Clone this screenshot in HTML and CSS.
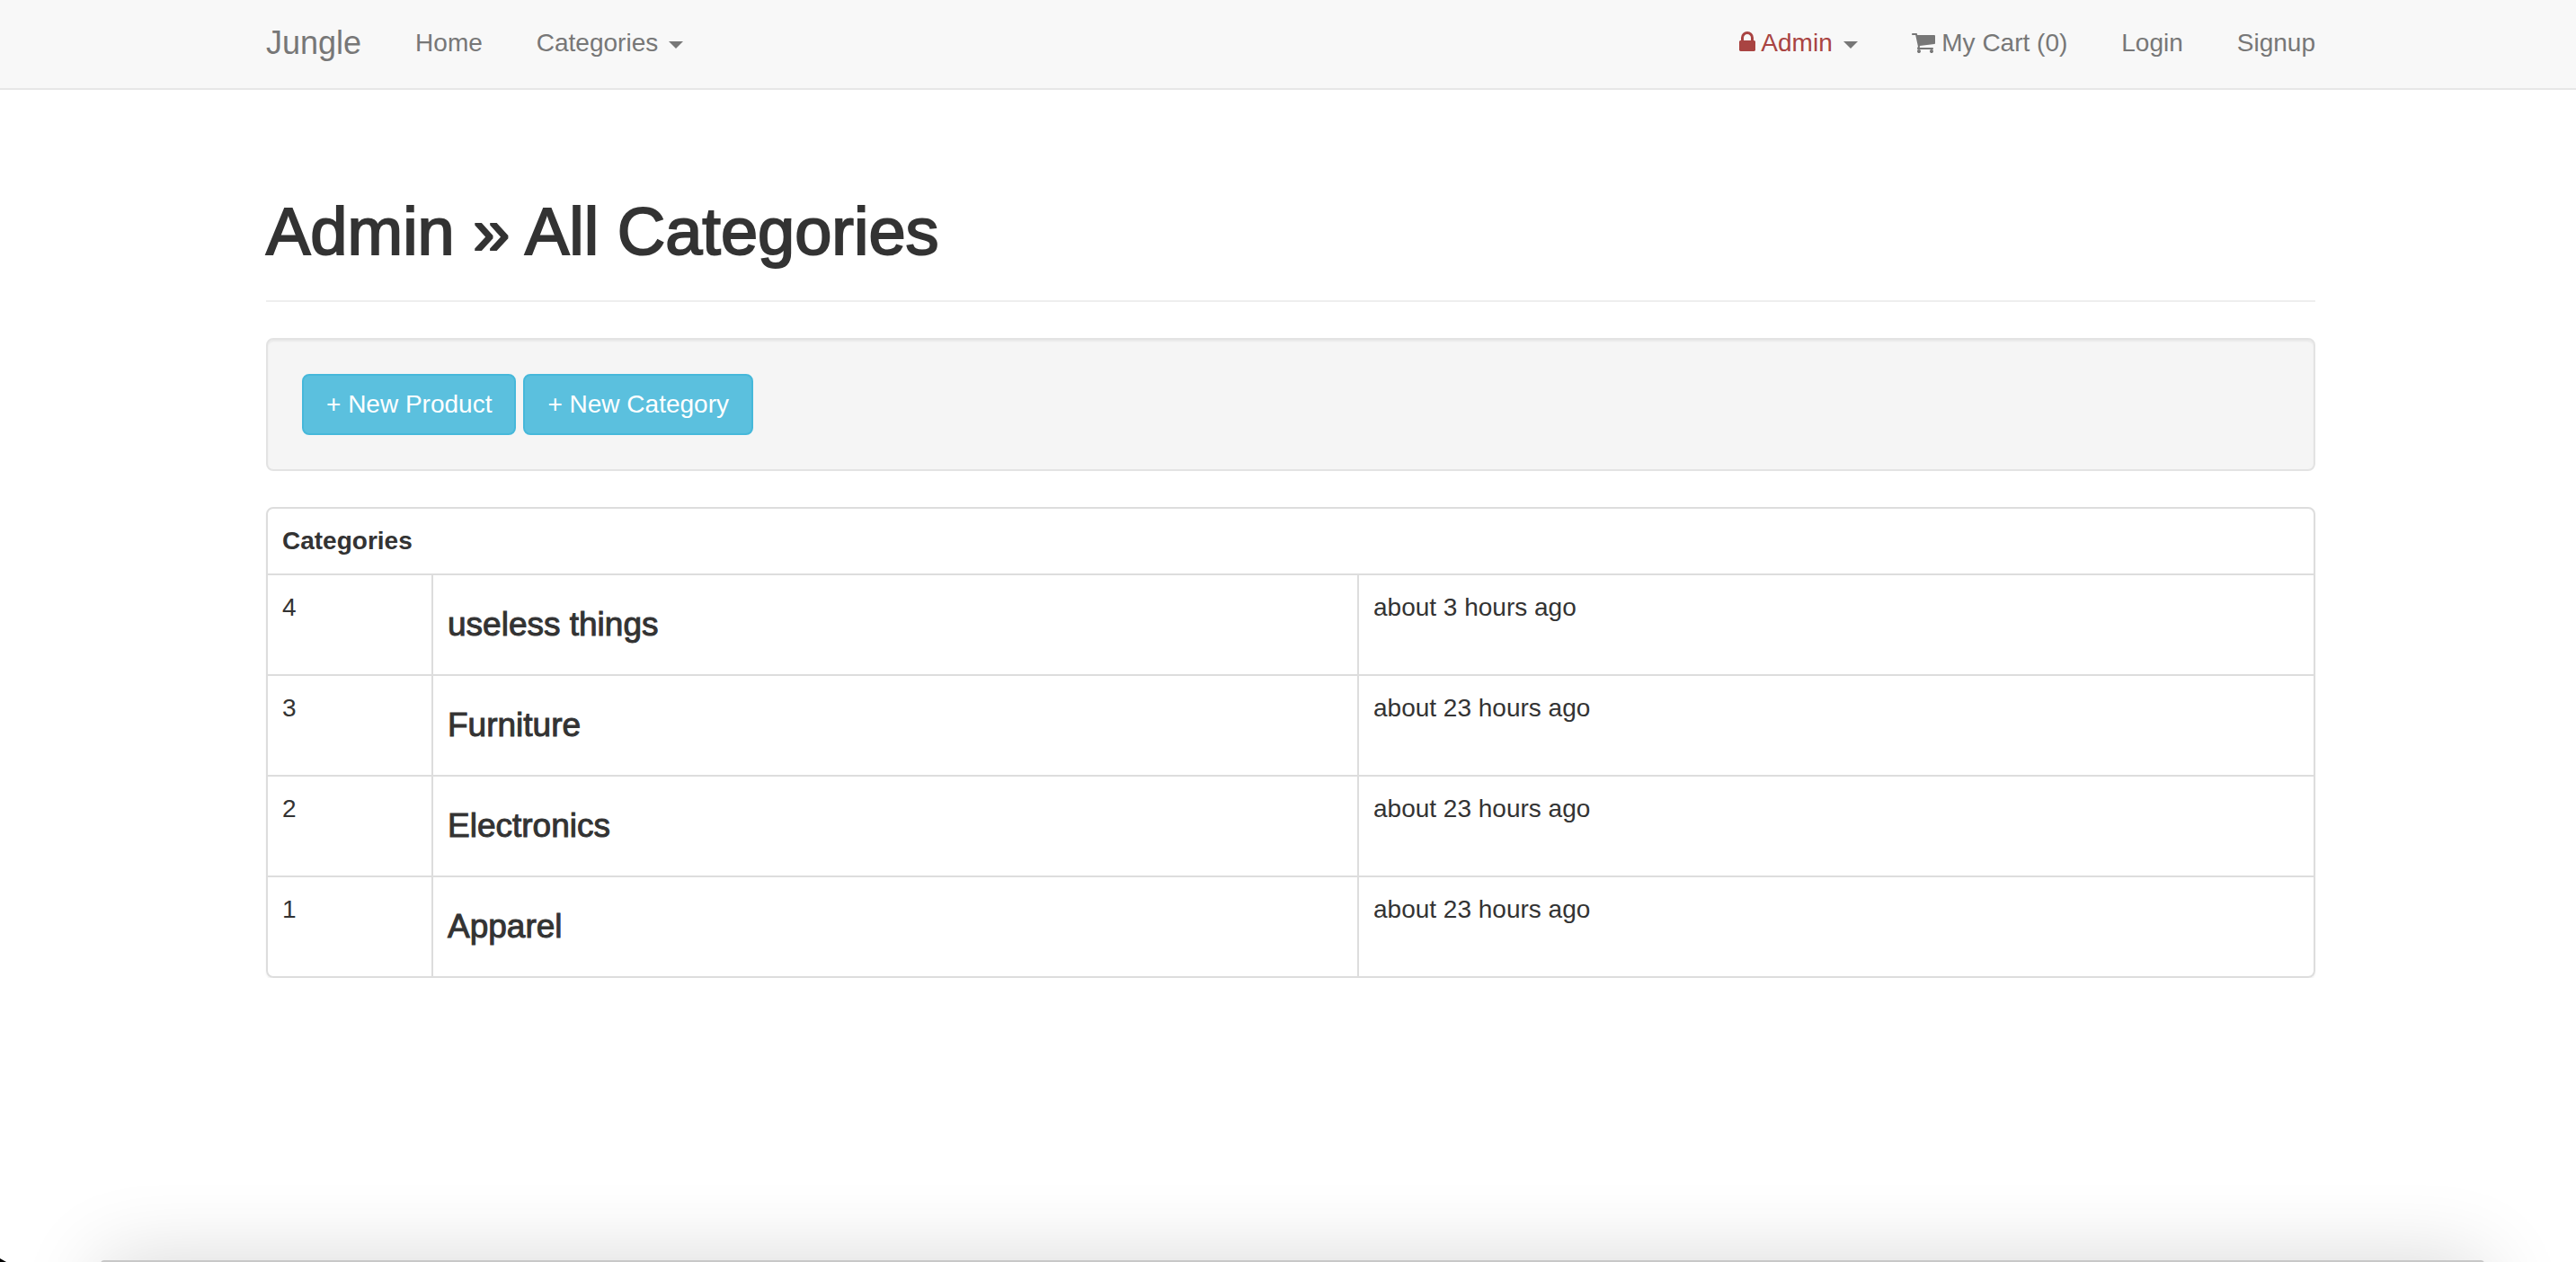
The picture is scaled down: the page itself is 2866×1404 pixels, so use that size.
FILE: index.html
```html
<!DOCTYPE html>
<html lang="en">
<head>
  <meta charset="utf-8">
  <meta name="viewport" content="width=device-width, initial-scale=1">
  <title>Jungle</title>
  <link rel="stylesheet" href="styles.css">
</head>
<body>
  <nav class="navbar">
    <div class="container navbar-inner">
      <a class="brand" href="#">Jungle</a>
      <ul class="nav">
        <li><a href="#">Home</a></li>
        <li><button class="toggle" type="button">Categories <span class="caret"></span></button></li>
      </ul>
      <ul class="nav nav-right">
        <li>
          <button class="toggle" type="button"><span class="danger"><svg class="icon" width="18" height="28" viewBox="320 0 1152 1792" aria-hidden="true"><path d="M640 768h512V576q0-106-75-181t-181-75-181 75-75 181v192zm832 96v576q0 40-28 68t-68 28H416q-40 0-68-28t-28-68V864q0-40 28-68t68-28h32V576q0-184 132-316t316-132 316 132 132 316v192h32q40 0 68 28t28 68z"/></svg> Admin</span> <span class="caret"></span></button>
        </li>
        <li>
          <a href="#"><svg class="icon" width="26" height="28" viewBox="64 0 1664 1792" aria-hidden="true"><path d="M704 1536q0 52-38 90t-90 38-90-38-38-90 38-90 90-38 90 38 38 90zm896 0q0 52-38 90t-90 38-90-38-38-90 38-90 90-38 90 38 38 90zm128-1088v512q0 24-16.500 42.500t-40.500 21.500l-1044 122q13 60 13 70 0 16-24 64h920q26 0 45 19t19 45-19 45-45 19h-1024q-26 0-45-19t-19-45q0-11 8-31.500t16-36 21.500-40 15.500-29.500l-177-823h-204q-26 0-45-19t-19-45 19-45 45-19h256q16 0 28.500 6.500t19.500 15.500 13 24.500 8 26 5.500 29.500 4.500 26h1201q26 0 45 19t19 45z"/></svg> My Cart (0)</a>
        </li>
        <li><a href="#">Login</a></li>
        <li><a href="#">Signup</a></li>
      </ul>
    </div>
  </nav>

  <main class="container">
    <header class="page-header">
      <h1>Admin » All Categories</h1>
    </header>

    <div class="well">
      <a class="btn" href="#">+ New Product</a>
      <a class="btn" href="#">+ New Category</a>
    </div>

    <div class="panel">
      <table class="table">
        <colgroup>
          <col class="col-id">
          <col class="col-name">
          <col>
        </colgroup>
        <thead>
          <tr><th colspan="3">Categories</th></tr>
        </thead>
        <tbody>
          <tr><td>4</td><td><h4>useless things</h4></td><td>about 3 hours ago</td></tr>
          <tr><td>3</td><td><h4>Furniture</h4></td><td>about 23 hours ago</td></tr>
          <tr><td>2</td><td><h4>Electronics</h4></td><td>about 23 hours ago</td></tr>
          <tr><td>1</td><td><h4>Apparel</h4></td><td>about 23 hours ago</td></tr>
        </tbody>
      </table>
    </div>
  </main>

  <div class="window-shade" aria-hidden="true"></div>
  <div class="window-corner" aria-hidden="true"></div>
</body>
</html>
```
FILE: styles.css
```css
* {
  box-sizing: border-box;
}

body {
  margin: 0;
  background: #fff;
  color: #333;
  font-family: "Helvetica Neue", "Liberation Sans", Arial, sans-serif;
  font-size: 28px;
  line-height: 40px;
}

.container {
  max-width: 2346px;
  margin: 0 auto;
  padding: 0 30px 0 36px;
}

/* Navigation */

.navbar {
  background: #f8f8f8;
  border-bottom: 2px solid #e7e7e7;
}

.navbar-inner {
  display: flex;
  align-items: center;
  gap: 60px;
  padding-top: 28px;
  padding-bottom: 30px;
}

.navbar a,
.toggle {
  color: #777;
  text-decoration: none;
}

.navbar .brand {
  font-size: 36px;
}

.nav {
  display: flex;
  gap: 60px;
  height: 40px;
  margin: 0;
  padding: 0;
  list-style: none;
}

.nav-right {
  margin-left: auto;
}

.toggle {
  padding: 0;
  border: 0;
  background: none;
  font: inherit;
  cursor: pointer;
}

.danger {
  color: #a94442;
}

.icon {
  fill: currentColor;
  vertical-align: -4px;
}

.caret {
  display: inline-block;
  margin-left: 4px;
  border-top: 8px solid;
  border-right: 8px solid transparent;
  border-left: 8px solid transparent;
  vertical-align: middle;
}

/* Page heading */

.page-header {
  margin: 118px 0 40px;
  padding-bottom: 36px;
  border-bottom: 2px solid #eee;
}

h1 {
  margin: 0;
  font-size: 74px;
  font-weight: 400;
  line-height: 80px;
  -webkit-text-stroke: 2px;
}

/* Action bar */

.well {
  display: flex;
  gap: 8px;
  margin-bottom: 40px;
  padding: 38px;
  border: 2px solid #e3e3e3;
  border-radius: 8px;
  background: #f5f5f5;
  box-shadow: inset 0 2px 2px rgba(0, 0, 0, 0.05);
}

.btn {
  padding: 12px 25px;
  border: 2px solid #46b8da;
  border-radius: 8px;
  background: #5bc0de;
  color: #fff;
  text-decoration: none;
}

/* Category list */

.panel {
  overflow: hidden;
  border: 2px solid #ddd;
  border-radius: 8px;
  box-shadow: 0 2px 2px rgba(0, 0, 0, 0.05);
}

.table {
  width: 100%;
  border-collapse: separate;
  border-spacing: 0;
  table-layout: fixed;
}

.col-id {
  width: 182px;
}

.col-name {
  width: 1030px;
}

th,
td {
  padding: 16px;
  text-align: left;
  vertical-align: top;
}

td {
  border-top: 2px solid #ddd;
}

td + td {
  border-left: 2px solid #ddd;
}

h4 {
  margin: 20px 0;
  font-size: 37px;
  font-weight: 400;
  line-height: 38px;
  -webkit-text-stroke: 1px;
}

/* Neighbouring window that casts its shadow on the bottom edge */

.window-shade {
  position: fixed;
  right: 102px;
  bottom: -298px;
  left: 112px;
  height: 300px;
  border-radius: 4px;
  background: #c8c8c8;
  box-shadow: 0 0 90px rgba(0, 0, 0, 0.16);
}

.window-corner {
  position: fixed;
  bottom: 0;
  left: 0;
  width: 7px;
  height: 4px;
  background: #000;
  clip-path: polygon(0 0, 100% 100%, 0 100%);
}
```
